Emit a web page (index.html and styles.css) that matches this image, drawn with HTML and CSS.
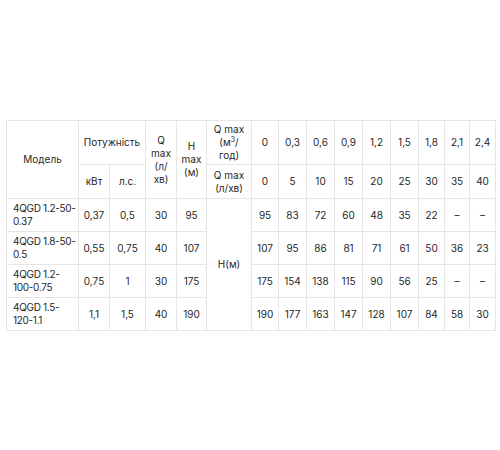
FILE: index.html
```html
<!DOCTYPE html>
<html lang="uk">
<head>
<meta charset="utf-8">
<title>4QGD</title>
<link rel="stylesheet" href="styles.css">
</head>
<body>
<div class="wrap">
<table class="spec">
  <colgroup>
    <col class="c-model"><col class="c-kw"><col class="c-hp"><col class="c-q"><col class="c-h"><col class="c-lab">
    <col class="c-v1"><col class="c-v"><col class="c-v"><col class="c-v"><col class="c-v"><col class="c-v"><col class="c-v2"><col class="c-v3"><col class="c-v2">
  </colgroup>
  <tr class="r-h1">
    <td rowspan="2">Модель</td>
    <td colspan="2">Потужність</td>
    <td rowspan="2">Q<br>max<br>(л/<br>хв)</td>
    <td rowspan="2">H<br>max<br>(м)</td>
    <td>Q max<br>(м<sup>3</sup>/<br>год)</td>
    <td>0</td><td>0,3</td><td>0,6</td><td>0,9</td><td>1,2</td><td>1,5</td><td>1,8</td><td>2,1</td><td>2,4</td>
  </tr>
  <tr class="r-h2">
    <td>кВт</td><td>л.с.</td>
    <td>Q max<br>(л/хв)</td>
    <td>0</td><td>5</td><td>10</td><td>15</td><td>20</td><td>25</td><td>30</td><td>35</td><td>40</td>
  </tr>
  <tr class="r-d r-d1">
    <td class="model">4QGD 1.2-50-<br>0.37</td><td>0,37</td><td>0,5</td><td>30</td><td>95</td>
    <td rowspan="4">H(м)</td>
    <td>95</td><td>83</td><td>72</td><td>60</td><td>48</td><td>35</td><td>22</td><td>–</td><td>–</td>
  </tr>
  <tr class="r-d">
    <td class="model">4QGD 1.8-50-<br>0.5</td><td>0,55</td><td>0,75</td><td>40</td><td>107</td>
    <td>107</td><td>95</td><td>86</td><td>81</td><td>71</td><td>61</td><td>50</td><td>36</td><td>23</td>
  </tr>
  <tr class="r-d">
    <td class="model">4QGD 1.2-<br>100-0.75</td><td>0,75</td><td>1</td><td>30</td><td>175</td>
    <td>175</td><td>154</td><td>138</td><td>115</td><td>90</td><td>56</td><td>25</td><td>–</td><td>–</td>
  </tr>
  <tr class="r-d">
    <td class="model">4QGD 1.5-<br>120-1.1</td><td>1,1</td><td>1,5</td><td>40</td><td>190</td>
    <td>190</td><td>177</td><td>163</td><td>147</td><td>128</td><td>107</td><td>84</td><td>58</td><td>30</td>
  </tr>
</table>
</div>
</body>
</html>
```

FILE: styles.css
```css
html, body {
  margin: 0;
  padding: 0;
  background: #ffffff;
}
.wrap {
  padding: 120px 5px 0 6px;
}
.spec {
  border-collapse: collapse;
  table-layout: fixed;
  width: 489px;
  font-family: Inter, "Liberation Sans", Arial, sans-serif;
  font-size: 10px;
  line-height: 13px;
  color: #1f1f1f;
}
.spec td {
  border: 1px solid #e6e6e6;
  padding: 2px 4px;
  text-align: center;
  vertical-align: middle;
}
.spec td.model {
  text-align: left;
  padding: 2px 2px 2px 6px;
  white-space: nowrap;
  letter-spacing: -0.3px;
}
.spec sup {
  font-size: 7px;
  line-height: 0;
  vertical-align: 4px;
}
.c-model { width: 72px; }
.c-kw { width: 31px; }
.c-hp { width: 36px; }
.c-q { width: 31px; }
.c-h { width: 30px; }
.c-lab { width: 45px; }
.c-v1 { width: 27px; }
.c-v { width: 28px; }
.c-v2 { width: 26px; }
.c-v3 { width: 25px; }
.r-h1 { height: 44px; }
.r-h2 { height: 34px; }
.r-d { height: 33px; }
```
